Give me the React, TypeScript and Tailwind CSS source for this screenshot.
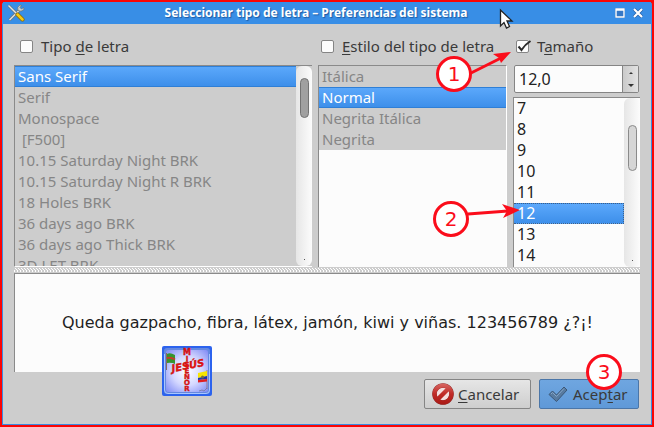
import { useState } from "react";
import type { ReactNode } from "react";

const families = [
  "Sans Serif",
  "Serif",
  "Monospace",
  "\u00a0[F500]",
  "10.15 Saturday Night BRK",
  "10.15 Saturday Night R BRK",
  "18 Holes BRK",
  "36 days ago BRK",
  "36 days ago Thick BRK",
  "3D LET BRK",
];
const styles = ["Itálica", "Normal", "Negrita Itálica", "Negrita"];
const sizes = ["7", "8", "9", "10", "11", "12", "13", "14"];

function Key({ children }: { children: ReactNode }) {
  return <span className="underline decoration-1 underline-offset-2 [text-decoration-skip-ink:none]">{children}</span>;
}

function Check({ id, checked, onChange, className, children }: {
  id: string; checked: boolean; onChange: (v: boolean) => void; className: string; children: ReactNode;
}) {
  return (
    <div className={"flex h-[22px] items-center gap-2 whitespace-nowrap " + className}>
      <span className="relative flex">
        <input
          id={id}
          type="checkbox"
          checked={checked}
          onChange={(e) => onChange(e.target.checked)}
          className="size-[13px] appearance-none rounded-[2px] border border-[#858585] bg-[#fcfcfc]"
        />
        {checked && (
          <svg className="pointer-events-none absolute -top-px left-0 h-[15px] w-[16px]" viewBox="0 0 16 15" aria-hidden="true">
            <path d="M2.500 7.500 L5.500 11 Q9 5.500 14.500 2" fill="none" stroke="#2b2b2b" strokeWidth="2" />
          </svg>
        )}
      </span>
      <label htmlFor={id}>{children}</label>
    </div>
  );
}

function List({ label, items, selected, onSelect, disabled }: {
  label: string; items: string[]; selected: string; onSelect: (v: string) => void; disabled?: boolean;
}) {
  return (
    <ul role="listbox" aria-label={label} aria-disabled={disabled} className="min-w-0 flex-1">
      {items.map((item) => (
        <li
          key={item}
          role="option"
          aria-selected={item === selected}
          onClick={() => !disabled && onSelect(item)}
          className={
            "h-[21px] truncate border-y pl-[3px] leading-[19px] " +
            (item === selected
              ? "bg-linear-to-b from-[#5ba8fb] to-[#3d8fea] text-white " +
                (disabled ? "border-[#2f7fd6]" : "border-r border-dotted border-[#3d5f88]")
              : disabled
                ? "border-transparent bg-[#cdcdcd] text-[#868686]"
                : "border-transparent text-[#222222]")
          }
        >
          {item}
        </li>
      ))}
    </ul>
  );
}

function Scrollbar({ thumb }: { thumb: string }) {
  return (
    <div className="flex w-4 shrink-0 flex-col items-center justify-between rounded-md bg-linear-to-r from-[#e6e6e6] to-[#fcfcfc] pb-1.5">
      <div className={"w-[9px] rounded-full border " + thumb} />
      <div className="size-px bg-[#555555]" />
    </div>
  );
}

function Badge({ n, className }: { n: string; className: string }) {
  return (
    <span className={"absolute flex size-9 items-center justify-center rounded-full border-[3px] border-[#fb0d1b] bg-white font-['DejaVu_Sans',sans-serif] text-[20px] leading-5 text-[#fb0d1b] " + className}>
      {n}
    </span>
  );
}

function Logo() {
  return (
    <svg className="absolute left-[162px] top-[346px] size-[50px]" viewBox="0 0 50 50" role="img" aria-label="Jesús mi Señor">
      <defs>
        <radialGradient id="glow" r="0.7">
          <stop offset="0" stopColor="#ffffff" />
          <stop offset="0.5" stopColor="#d4d8ff" />
          <stop offset="1" stopColor="#7f8af4" />
        </radialGradient>
      </defs>
      <rect width="50" height="50" rx="2" fill="#2c63ee" />
      <rect x="2" y="2" width="46" height="46" rx="3" fill="#6488e0" />
      <path d="M2.500 8 V44 Q2.500 47.500 6 47.500 H44 Q47.500 47.500 47.500 44 V8" fill="none" stroke="#a9c6ff" />
      <rect x="4" y="4" width="42" height="42" rx="2" fill="url(#glow)" />
      <path d="M4.500 7 V24" stroke="#8a6a62" strokeWidth="1" />
      <path d="M5 8 Q8 6 13 9 V18 Q9 16 5 17Z" fill="#36952e" />
      <path d="M5 12 Q9 11 13 13.500" stroke="#c43c2c" strokeWidth="2" fill="none" />
      <path d="M45 24 V43" stroke="#8f7d92" strokeWidth="1" />
      <path d="M36 27 L45 25 V30 L36 32Z" fill="#f7e600" />
      <path d="M36 32 L45 30 V33 L36 34Z" fill="#2036a8" />
      <path d="M36 34 L45 33 V35.500 L36 36.500Z" fill="#e02020" />
      <circle cx="40.500" cy="31" r="1.500" fill="#76703a" />
      <path d="M37 45 l3 -1 l2 1 l3 -3" stroke="#77789a" fill="none" strokeWidth="0.800" />
      <g className="font-['DejaVu_Sans',sans-serif] font-bold" fill="#e8120e" stroke="#c01418" strokeWidth="0.400" textAnchor="middle">
        {["M", "I", "S", "E", "Ñ", "O", "R"].map((c, i) => (
          <text key={i} x="25" y={9 + i * 6} fontSize={i === 0 ? 8 : 7}>{c}</text>
        ))}
        <text x="26" y="23" fontSize="10" fontStyle="italic" transform="rotate(-11 26 20)">JESÚS</text>
      </g>
    </svg>
  );
}

export default function App() {
  const [useFamily, setUseFamily] = useState(false);
  const [useStyle, setUseStyle] = useState(false);
  const [useSize, setUseSize] = useState(true);
  const [family, setFamily] = useState("Sans Serif");
  const [style, setStyle] = useState("Normal");
  const [size, setSize] = useState("12");

  const step = (d: number) => setSize(String(Number(size) + d));

  return (
    <div className="relative overflow-hidden border-2 border-[#fb0505] bg-[#fb0505] font-['Noto_Sans','Open_Sans',sans-serif] text-[15px] text-[#3a3a3a]">
      <main className="rounded-t-[3px] border-x border-b border-[#3b8be0] bg-[#cdcdcd]">
        <header className="flex h-[22px] items-center bg-[#388ee6] px-1 text-white">
          <svg className="size-[18px] shrink-0" viewBox="0 0 18 18" aria-hidden="true">
            <path d="M2.500 16 L12 6.500" stroke="#626b70" strokeWidth="3" />
            <path d="M2.500 16 L12 6.500" stroke="#d8dddd" strokeWidth="1.700" />
            <path d="M13 1 Q9.500 3 11 6.500 Q14 8.500 17 5.500 L16.500 3.500 L14.500 5 L13 3.500 L14.500 1.500Z" fill="#cbd1d1" stroke="#667074" strokeWidth="0.700" />
            <path d="M1.500 1.500 L9.500 9.500" stroke="#6b7377" strokeWidth="2.600" />
            <path d="M1.500 1.500 L9.500 9.500" stroke="#e5e8e8" strokeWidth="1.400" />
            <path d="M10.500 10.500 L15.500 15.500" stroke="#8b6b00" strokeWidth="4" strokeLinecap="round" />
            <path d="M10.500 10.500 L15.500 15.500" stroke="#f4c915" strokeWidth="2.500" strokeLinecap="round" />
          </svg>
          <h1 className="min-w-0 flex-1 truncate pr-3 pl-1 text-center text-[12px] font-bold [text-shadow:1px_1px_1px_#1d5ba3]">
            Seleccionar tipo de letra – Preferencias del sistema
          </h1>
          <div className="flex shrink-0 items-center gap-2 pr-1">
            <button type="button" aria-label="Maximizar" className="flex">
              <svg className="size-[10px]" viewBox="0 0 10 10" aria-hidden="true">
                <rect width="10" height="10" fill="#245fa7" />
                <path d="M1 1 H9 V9 H1Z M1 2 H9" fill="#3678c6" stroke="#ffffff" strokeWidth="1.400" />
              </svg>
            </button>
            <button type="button" aria-label="Cerrar" className="flex">
              <svg className="size-[10px]" viewBox="0 0 10 10" aria-hidden="true">
                <path d="M1 1 L9 9 M9 1 L1 9" stroke="#245fa7" strokeWidth="3.400" />
                <path d="M1 1 L9 9 M9 1 L1 9" stroke="#ffffff" strokeWidth="2.200" />
              </svg>
            </button>
          </div>
        </header>

        <form className="px-[11px] pt-[11px] pb-[15px]" onSubmit={(e) => e.preventDefault()}>
          <div className="grid grid-cols-[298fr_189fr_127fr] gap-x-1.5">
            <section className="flex min-w-0 flex-col gap-2">
              <Check id="family" checked={useFamily} onChange={setUseFamily} className="pl-1.5">
                Tipo <Key>d</Key>e letra
              </Check>
              <div className="flex h-[202px] overflow-hidden border-t border-b border-l border-[#8a8a8a] border-b-white bg-[#cdcdcd]">
                <List label="Tipo de letra" items={families} selected={family} onSelect={setFamily} disabled={!useFamily} />
                <Scrollbar thumb="mt-3 h-10 border-[#737373] bg-[#a0a0a0]" />
              </div>
            </section>
            <section className="flex min-w-0 flex-col gap-2">
              <Check id="style" checked={useStyle} onChange={setUseStyle} className="pl-[3px]">
                <Key>E</Key>stilo del tipo de letra
              </Check>
              <div className="flex h-[202px] overflow-hidden border-t border-r border-l border-[#8a8a8a] border-r-white bg-[#fcfcfc]">
                <List label="Estilo del tipo de letra" items={styles} selected={style} onSelect={setStyle} disabled={!useStyle} />
              </div>
            </section>
            <section className="flex min-w-0 flex-col">
              <Check id="size" checked={useSize} onChange={setUseSize} className="mb-2 pl-[3px]">
                T<Key>a</Key>maño
              </Check>
              <div className="mr-px mb-1 ml-px flex h-7 overflow-hidden rounded-[2px] border border-[#858585] bg-[#fcfcfc] text-[16px]">
                <input
                  aria-label="Tamaño"
                  value={size + ",0"}
                  onChange={(e) => setSize(e.target.value.split(",")[0])}
                  className="min-w-0 flex-1 pl-1 text-[#222222] outline-none"
                />
                <div className="flex w-4 flex-col border-l border-[#858585] bg-linear-to-r from-[#cacaca] to-[#e2e2e2]">
                  <button type="button" aria-label="Aumentar" className="flex flex-1 items-center justify-center" onClick={() => step(1)}>
                    <svg className="h-[2px] w-[4px]" viewBox="0 0 4 2" aria-hidden="true"><path d="M0 2 L2 0 L4 2Z" fill="#333333" /></svg>
                  </button>
                  <button type="button" aria-label="Reducir" className="flex flex-1 items-center justify-center" onClick={() => step(-1)}>
                    <svg className="h-[3px] w-[6px]" viewBox="0 0 6 3" aria-hidden="true"><path d="M0 0 H6 L3 3Z" fill="#333333" /></svg>
                  </button>
                </div>
              </div>
              <div className="flex h-[170px] overflow-hidden border-t border-l border-[#8a8a8a] bg-[#fcfcfc] text-[16px]">
                <List label="Lista de tamaños" items={sizes} selected={size} onSelect={setSize} />
                <Scrollbar thumb="mt-[27px] h-[46px] border-[#8a8a8a] bg-[#d6d6d6]" />
              </div>
            </section>
          </div>

          <svg className="block h-1.5 w-full" aria-hidden="true">
            <defs>
              <pattern id="grip" width="6" height="4" patternUnits="userSpaceOnUse">
                <path d="M0 0h1v1h-1z M1 1h1v1h-1z M2 2h1v1h-1z M3 0h1v1h-1z M4 1h1v1h-1z M5 2h1v1h-1z M0 3h1v1h-1z M3 3h1v1h-1z" fill="#ffffff" />
              </pattern>
            </defs>
            <rect y="1" width="100%" height="4" fill="url(#grip)" />
          </svg>

          <output className="flex h-[99px] items-center justify-center border-t border-l border-[#8a8a8a] bg-[#fcfcfc] font-['DejaVu_Sans',sans-serif] text-[16px] whitespace-nowrap text-[#1f1f1f]">
            Queda gazpacho, fibra, látex, jamón, kiwi y viñas. 123456789 ¿?¡!
          </output>

          <div className="mt-[7px] flex justify-end gap-2 pr-px">
            <button type="button" className="flex h-[30px] w-[107px] items-center gap-1 rounded-[2px] border border-[#858585] bg-linear-to-b from-[#e6e6e6] to-[#cecece] pl-[7px]">
              <svg className="size-[22px]" viewBox="0 0 22 22" aria-hidden="true">
                <defs>
                  <linearGradient id="stop" x1="0" y1="0" x2="0" y2="22" gradientUnits="userSpaceOnUse">
                    <stop offset="0" stopColor="#d96a66" />
                    <stop offset="0.5" stopColor="#c02a26" />
                    <stop offset="1" stopColor="#a81a16" />
                  </linearGradient>
                </defs>
                <circle cx="11" cy="11" r="8.500" fill="#f4dede" stroke="#8d2a28" strokeWidth="4.600" />
                <circle cx="11" cy="11" r="8.500" fill="none" stroke="url(#stop)" strokeWidth="4" />
                <path d="M5 17 L17 5" stroke="url(#stop)" strokeWidth="4.500" />
              </svg>
              <span><Key>C</Key>ancelar</span>
            </button>
            <button type="submit" className="flex h-[30px] w-[100px] items-center gap-[5px] rounded-[2px] border border-[#4b76a8] bg-linear-to-b from-[#6fa6e0] to-[#5f99d8] pl-2">
              <svg className="size-5" viewBox="0 0 20 20" aria-hidden="true">
                <path d="M1 10.500 L4.500 7 L8.500 11 L16 3 L19 6 L8.500 17.500Z" fill="#587ba0" stroke="#3c5878" strokeWidth="1" strokeLinejoin="round" />
                <path d="M3 10 L4.500 8.500 L8.500 12.500 L16 4.500" fill="none" stroke="#85a6c8" strokeWidth="1" />
              </svg>
              <span>Acep<Key>t</Key>ar</span>
            </button>
          </div>
        </form>
      </main>

      <div className="pointer-events-none absolute -top-0.5 -left-0.5 h-[427px] w-[654px]">
        <Logo />
        <svg className="absolute top-0 left-0 h-full w-full" viewBox="0 0 654 427" aria-hidden="true">
          <path d="M471 73 L501 58" stroke="#fb0d1b" strokeWidth="3" />
          <path d="M511 52 L493 54 L499 58 L501 63Z" fill="#fb0d1b" />
          <path d="M468 214 L508 211" stroke="#fb0d1b" strokeWidth="3" />
          <path d="M520 210 L502 204 L507 211 L503 218Z" fill="#fb0d1b" />
          <path d="M500.500 10 V26 L504 22.500 L506.500 28 L509.500 26.500 L507 21 H512Z" fill="#ffffff" stroke="#222222" strokeWidth="1.300" />
        </svg>
        <Badge n="1" className="top-14 left-[436px]" />
        <Badge n="2" className="top-[201px] left-[433px]" />
        <Badge n="3" className="top-[354px] left-[586px]" />
      </div>
    </div>
  );
}
